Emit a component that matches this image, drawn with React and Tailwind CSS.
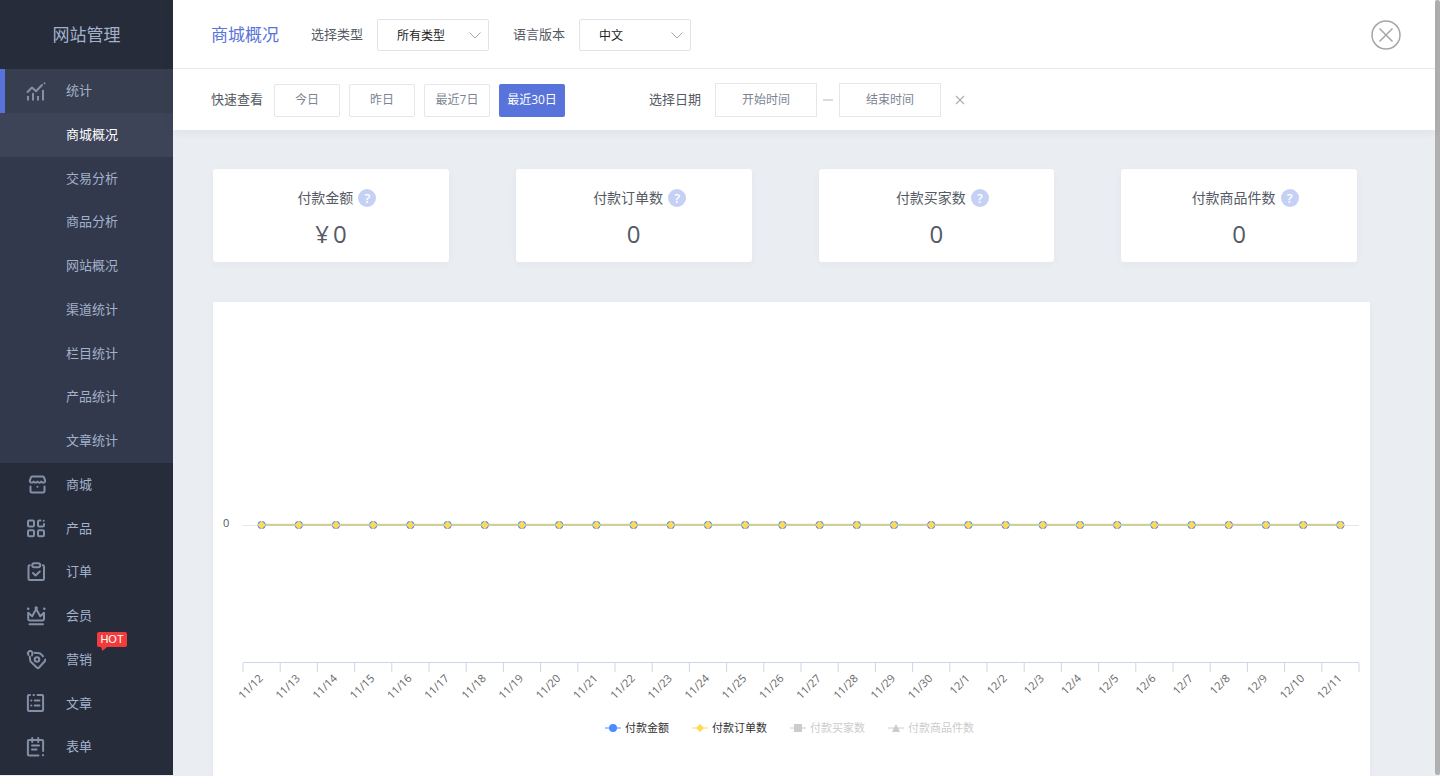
import React from "react";

const stroke = { fill: "none", stroke: "currentColor", strokeWidth: 2, strokeLinecap: "round", strokeLinejoin: "round" };

function Icon({ children }) {
  return (
    <svg viewBox="0 0 20 20" className="h-5 w-5 shrink-0 text-[#8390a6]" aria-hidden="true" {...stroke}>
      {children}
    </svg>
  );
}

const StatsIcon = () => (
  <Icon>
    <path d="M1.500 11 6 6.500 10 10.200 16 4" />
    <path d="M2 15v4.500M7 12v7.500M12 15v4.500M17 9v10.500" strokeLinecap="butt" strokeWidth="2" />
    <circle cx="18.500" cy="2.300" r="1" fill="currentColor" stroke="none" />
  </Icon>
);

const ShopIcon = () => (
  <Icon>
    <path d="M6.200 1.500h10.600q1 0 1.300 1l1.100 3.400c0 2-2.800 2.400-3.900.6-1.100 1.700-2.700 1.700-3.800 0-1.100 1.700-2.700 1.700-3.800 0-1.100 1.800-3.900 1.400-3.900-.6L4.900 2.500q.3-1 1.300-1Z" />
    <path d="M4.500 11.500v4.700q0 1.300 1.300 1.300h11.400q1.300 0 1.300-1.300v-4.700" />
    <circle cx="11.500" cy="11.800" r="1" fill="currentColor" stroke="none" />
  </Icon>
);

const ProductIcon = () => (
  <Icon>
    <rect x="2" y="2.500" width="6" height="6" rx="1.200" />
    <rect x="2" y="12.300" width="6" height="6" rx="1.200" />
    <rect x="12" y="12.300" width="6" height="6" rx="1.200" />
    <path d="M14.500 2.500h-1.300q-1.200 0-1.200 1.200v3.600q0 1.200 1.200 1.200h3.600q1.200 0 1.200-1.200V6" />
    <circle cx="17.700" cy="2.800" r="1" fill="currentColor" stroke="none" />
  </Icon>
);

const OrderIcon = () => (
  <Icon>
    <path d="M3.800 3.200q-1.300 0-1.300 1.300v12.200q0 1.300 1.300 1.300h12.900q1.300 0 1.300-1.300V4.500q0-1.300-1.300-1.300" />
    <rect x="6.200" y="1.200" width="8" height="4" rx="2" />
    <path d="m7 11 2.600 2.500 4.200-4" />
  </Icon>
);

const CrownIcon = () => (
  <Icon>
    <path d="M2.200 6.700v6.400q0 1.400 1.400 1.400h13q1.400 0 1.400-1.400V6.700l-3.800 3.600L10.200 3 6.200 10.300Z" />
    <circle cx="10.200" cy="1.900" r="1.700" fill="currentColor" stroke="none" />
    <circle cx="2.200" cy="2.800" r="1.300" fill="currentColor" stroke="none" />
    <circle cx="18.300" cy="2.800" r="1.300" fill="currentColor" stroke="none" />
    <path d="M3.500 18.300h13.500" />
  </Icon>
);

const TagIcon = () => (
  <Icon>
    <path d="M2.500 5C.8 2.800 3.200.2 5.200 1.200c1.600.8 1.400 2.600.8 4.300" />
    <path d="M8.500 2.700 13.300 3.200q.8.100 1.400.7L17 6.200M19.200 9.500q.5.800-.2 1.500l-6.200 6.700q-.8.800-1.700 0L5 12q-.6-.5-.7-1.200L3.800 6.800" />
    <circle cx="11" cy="9.500" r="2.300" />
  </Icon>
);

const ArticleIcon = () => (
  <Icon>
    <path d="M4 2H3Q1.900 2 1.900 3.100v13.800q0 1.100 1.100 1.100h13q1.100 0 1.100-1.100V3.100Q17.100 2 16 2h-4.500M7.500 2h.5" />
    <path d="M5.200 7.500h.2M5.200 12.500h.2M8.800 7.500h4.700M8.800 12.500h4.700" />
  </Icon>
);

const FormIcon = () => (
  <Icon>
    <path d="M12.500 18.500H3q-1.100 0-1.100-1.100V4.100Q1.900 3 3 3h13q1.100 0 1.100 1.100V14M6.200 1v4M12.200 1v4" />
    <path d="M6 8.500h7M6 12.500h4.500" />
    <circle cx="17" cy="18.200" r="1.100" fill="currentColor" stroke="none" />
  </Icon>
);

const subItems = ["商城概况", "交易分析", "商品分析", "网站概况", "渠道统计", "栏目统计", "产品统计", "文章统计"];
const mainItems = [
  { label: "商城", icon: ShopIcon },
  { label: "产品", icon: ProductIcon },
  { label: "订单", icon: OrderIcon },
  { label: "会员", icon: CrownIcon },
  { label: "营销", icon: TagIcon, hot: true },
  { label: "文章", icon: ArticleIcon },
  { label: "表单", icon: FormIcon },
];

function Sidebar() {
  return (
    <aside className="mb-px flex w-[173px] shrink-0 flex-col bg-[#262c3a] pb-1.5 text-[13px] text-[#a3b1cb]">
      <h1 className="flex h-[69px] shrink-0 items-center justify-center text-[17px]">网站管理</h1>
      <nav className="flex flex-1 flex-col">
        <a href="#stats" className="flex flex-1 items-center gap-5 border-l-[5px] border-[#5873d9] bg-[#373e50] pl-[21px]">
          <StatsIcon />
          统计
        </a>
        <ul className="flex flex-8 flex-col bg-[#32394c]">
          {subItems.map((item, i) => (
            <li key={item} className="flex flex-1">
              <a
                href={"#sub-" + i}
                className={i === 0 ? "flex flex-1 items-center bg-[#3d4458] pl-[66px] text-white" : "flex flex-1 items-center pl-[66px]"}
              >
                {item}
              </a>
            </li>
          ))}
        </ul>
        <ul className="flex flex-7 flex-col">
          {mainItems.map(({ label, icon: Glyph, hot }, i) => (
            <li key={label} className="relative flex flex-1">
              <a href={"#main-" + i} className="flex flex-1 items-center gap-5 pl-[26px]">
                <Glyph />
                {label}
              </a>
              {hot && (
                <span className="absolute -top-1.5 left-[97px] flex h-[15px] w-[30px] items-center justify-center rounded-xs bg-[#f23c3c] font-['Liberation_Sans',sans-serif] text-[11px] text-white">
                  HOT
                  <svg viewBox="0 0 6 4" className="absolute top-full left-1 h-1 w-1.5" aria-hidden="true">
                    <path d="M0 0h6L1.500 4Z" fill="#f23c3c" />
                  </svg>
                </span>
              )}
            </li>
          ))}
        </ul>
      </nav>
    </aside>
  );
}

function SelectField({ id, label, options }) {
  return (
    <div className="flex items-center gap-[14px]">
      <label htmlFor={id} className="text-[13px] text-[#555a64]">{label}</label>
      <div className="relative">
        <select id={id} className="block h-8 w-28 appearance-none rounded-xs border border-[#e2e3ea] bg-white pt-0.5 pl-[19px] text-xs text-[#222]">
          {options.map((o) => (
            <option key={o}>{o}</option>
          ))}
        </select>
        <svg viewBox="0 0 12 7" className="pointer-events-none absolute top-[13px] right-2 h-[7px] w-3" fill="none" stroke="#a8a8a8" aria-hidden="true">
          <path d="m.5.5 5.500 5.500L11.500.5" />
        </svg>
      </div>
    </div>
  );
}

const ranges = ["今日", "昨日", "最近7日", "最近30日"];

function Toolbar() {
  return (
    <header className="relative z-10 shrink-0 bg-white shadow-[0_2px_10px_rgba(60,70,90,0.07)]">
      <div className="flex h-[69px] items-center border-b border-[#e7e7f1] pt-px pr-[34px] pl-[38px]">
        <h2 className="mr-8 text-[17px] text-[#5873d9]">商城概况</h2>
        <div className="flex gap-6">
          <SelectField id="type" label="选择类型" options={["所有类型"]} />
          <SelectField id="language" label="语言版本" options={["中文"]} />
        </div>
        <button aria-label="关闭" className="ml-auto">
          <svg viewBox="0 0 30 30" className="h-[30px] w-[30px]" fill="none" stroke="#a6a6a6" strokeWidth="1.500">
            <circle cx="15" cy="15" r="14" />
            <path d="m8.500 8.500 13 13M21.500 8.500l-13 13" />
          </svg>
        </button>
      </div>
      <div className="flex h-[61px] items-center pl-[38px] text-xs text-[#7c8494]">
        <span className="mr-[11px] text-[13px] text-[#555a64]">快速查看</span>
        <div className="flex gap-[9px] pt-px">
          {ranges.map((r, i) => (
            <button
              key={r}
              className={
                i === 3
                  ? "h-[33px] w-[66px] rounded-xs bg-[#5873d9] text-white"
                  : "h-[33px] w-[66px] rounded-xs border border-[#e6e6e9]"
              }
            >
              {r}
            </button>
          ))}
        </div>
        <label htmlFor="start" className="mr-[14px] ml-[84px] text-[13px] text-[#555a64]">选择日期</label>
        <input id="start" type="text" placeholder="开始时间" className="h-[34px] w-[102px] border border-[#e6e6e9] text-center placeholder:text-[#7c8494]" />
        <span className="mx-[6px] h-0.5 w-2.5 bg-[#dcdcdc]" />
        <input aria-label="结束时间" type="text" placeholder="结束时间" className="h-[34px] w-[102px] border border-[#e6e6e9] text-center placeholder:text-[#7c8494]" />
        <button aria-label="清除日期" className="ml-[14px]">
          <svg viewBox="0 0 10 10" className="h-2.5 w-2.5" fill="none" stroke="#b0b0b0" strokeWidth="1.200">
            <path d="m1 1 8 8M9 1 1 9" />
          </svg>
        </button>
      </div>
    </header>
  );
}

const metrics = [
  { label: "付款金额", value: "0", currency: "¥" },
  { label: "付款订单数", value: "0" },
  { label: "付款买家数", value: "0" },
  { label: "付款商品件数", value: "0" },
];

function MetricCard({ label, value, currency }) {
  return (
    <section className="flex h-[93px] flex-col items-center rounded-[3px] bg-white pt-[19px] text-[#555a64] shadow-[0_2px_8px_rgba(60,70,90,0.04)]">
      <h3 className="flex h-5 items-center gap-[5px] pl-3 text-sm">
        {label}
        <button aria-label={label + "说明"} className="flex h-[18px] w-[18px] items-center justify-center rounded-full bg-[#c5d0f5] text-[13px] font-semibold text-white">
          ?
        </button>
      </h3>
      <p className="mt-3 flex gap-1 text-2xl leading-7">
        {currency && <span>{currency}</span>}
        <span>{value}</span>
      </p>
    </section>
  );
}

const days = [
  ...Array.from({ length: 19 }, (_, i) => "11/" + (12 + i)),
  ...Array.from({ length: 11 }, (_, i) => "12/" + (1 + i)),
];
const axisStart = 30;
const step = 37.2;
const axisEnd = axisStart + step * days.length;
const center = (i) => axisStart + step * (i + 0.5);

const legend = [
  { label: "付款金额", color: "#4a8cff", on: true, mark: <circle cx="8" cy="6" r="4" /> },
  { label: "付款订单数", color: "#ffd954", on: true, mark: <path d="m8 2 4 4-4 4-4-4Z" /> },
  { label: "付款买家数", color: "#cccccc", on: false, mark: <path d="M4 2h8v8H4Z" /> },
  { label: "付款商品件数", color: "#cccccc", on: false, mark: <path d="m8 2 4 8H4Z" /> },
];

function Chart() {
  return (
    <section className="flex-1 bg-white shadow-[0_2px_8px_rgba(60,70,90,0.04)]">
      <svg viewBox="0 0 1157 402" className="block w-full" role="img" aria-label="付款趋势">
        <path d={`M${axisStart} 223.500H${axisEnd}`} stroke="#e6e6e6" />
        <text x="10" y="225" fontSize="11" fill="#555">0</text>
        <path d={`M${center(0)} 223H${center(days.length - 1)}`} stroke="#bccbd4" strokeWidth="2" />
        <path d={`M${center(0)} 222.500H${center(days.length - 1)}`} stroke="#dccf84" strokeWidth="1.500" />
        <path d={`M${axisStart} 360.500H${axisEnd}`} stroke="#ccd6eb" />
        {Array.from({ length: days.length + 1 }, (_, i) => (
          <path key={i} d={`M${axisStart + step * i} 361v9`} stroke="#ccd6eb" />
        ))}
        {days.map((day, i) => (
          <g key={day}>
            <circle cx={center(i)} cy="223" r="4" fill="#4a8cff" />
            <path d={`M${center(i)} 218.800l4.200 4.200-4.200 4.200-4.200-4.200Z`} fill="#ffd954" />
            <text x={center(i) + 2} y="377" fontSize="11" fill="#666" textAnchor="end" transform={`rotate(-45 ${center(i) + 2} 377)`}>
              {day}
            </text>
          </g>
        ))}
      </svg>
      <div className="mt-3.5 flex justify-center gap-[23px] pr-1">
        {legend.map(({ label, color, on, mark }) => (
          <button key={label} className={on ? "flex h-5 items-center gap-1 text-[11px] text-[#333]" : "flex h-5 items-center gap-1 text-[11px] text-[#ccc]"}>
            <svg viewBox="0 0 16 12" className="h-3 w-4" fill={color} aria-hidden="true">
              <path d="M0 6h16" stroke={color} />
              {mark}
            </svg>
            {label}
          </button>
        ))}
      </div>
    </section>
  );
}

export default function App() {
  return (
    <div className="flex h-screen min-h-[640px] bg-[#eaedf2] font-['Open_Sans','Noto_Sans_CJK_SC',sans-serif]">
      <Sidebar />
      <div className="flex min-w-0 flex-1 flex-col">
        <Toolbar />
        <main className="flex min-h-0 flex-1 flex-col gap-10 overflow-hidden pt-[39px] pr-[65px] pl-10">
          <div className="grid grid-cols-4 gap-[67px] pr-[13px]">
            {metrics.map((m) => (
              <MetricCard key={m.label} {...m} />
            ))}
          </div>
          <Chart />
        </main>
      </div>
      <div className="mb-px w-[5px] shrink-0 rounded-full bg-[#b0b0b0]" />
    </div>
  );
}
